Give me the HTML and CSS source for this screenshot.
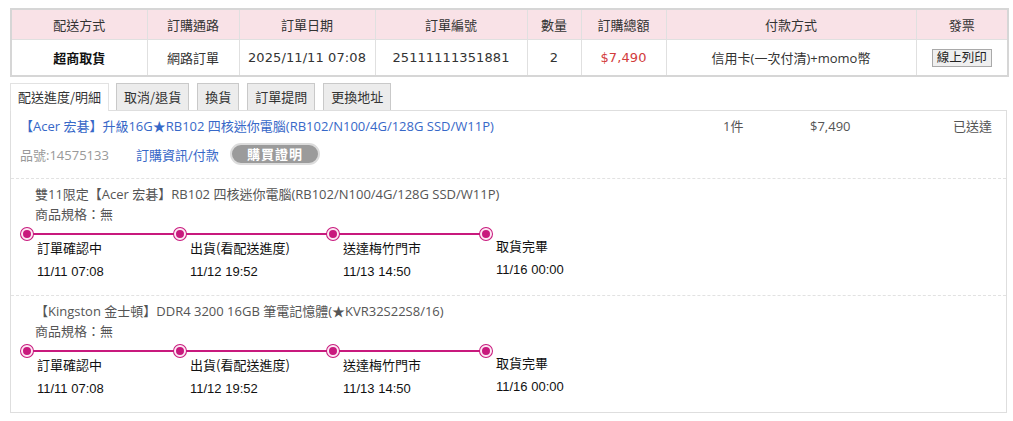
FILE: index.html
```html
<!DOCTYPE html>
<html lang="zh-Hant">
<head>
<meta charset="utf-8">
<title>訂單明細</title>
<link rel="stylesheet" href="styles.css">
</head>
<body>
<div class="page">
  <table class="order">
    <thead>
      <tr>
        <th class="c1">配送方式</th>
        <th class="c2">訂購通路</th>
        <th class="c3">訂單日期</th>
        <th class="c4">訂單編號</th>
        <th class="c5">數量</th>
        <th class="c6">訂購總額</th>
        <th class="c7">付款方式</th>
        <th class="c8">發票</th>
      </tr>
    </thead>
    <tbody>
      <tr>
        <td class="bold">超商取貨</td>
        <td>網路訂單</td>
        <td class="num">2025/11/11 07:08</td>
        <td class="num">25111111351881</td>
        <td class="num">2</td>
        <td class="num price">$7,490</td>
        <td>信用卡(一次付清)+momo幣</td>
        <td><span class="print-btn">線上列印</span></td>
      </tr>
    </tbody>
  </table>

  <div class="tabs">
    <span class="tab active">配送進度/明細</span>
    <span class="tab">取消/退貨</span>
    <span class="tab">換貨</span>
    <span class="tab">訂單提問</span>
    <span class="tab">更換地址</span>
  </div>

  <div class="panel">
    <div class="product">
      <div class="prod-row">
        <a class="prod-title">【Acer 宏碁】升級16G★RB102 四核迷你電腦(RB102/N100/4G/128G SSD/W11P)</a>
        <span class="prod-qty">1件</span>
        <span class="prod-price">$7,490</span>
        <span class="prod-status">已送達</span>
      </div>
      <div class="prod-meta">
        <span class="sku">品號:14575133</span>
        <a class="info-link">訂購資訊/付款</a>
        <span class="proof-btn">購買證明</span>
      </div>
    </div>

    <div class="item">
      <div class="item-name">雙11限定【Acer 宏碁】RB102 四核迷你電腦(RB102/N100/4G/128G SSD/W11P)</div>
      <div class="item-spec">商品規格：無</div>
      <div class="timeline">
        <div class="step">
          <div class="track"><span class="dot"></span><span class="line"></span></div>
          <div class="label">訂單確認中</div>
          <div class="date">11/11 07:08</div>
        </div>
        <div class="step">
          <div class="track"><span class="dot"></span><span class="line"></span></div>
          <div class="label">出貨(看配送進度)</div>
          <div class="date">11/12 19:52</div>
        </div>
        <div class="step">
          <div class="track"><span class="dot"></span><span class="line"></span></div>
          <div class="label">送達梅竹門市</div>
          <div class="date">11/13 14:50</div>
        </div>
        <div class="step last">
          <div class="track"><span class="dot"></span></div>
          <div class="label">取貨完畢</div>
          <div class="date">11/16 00:00</div>
        </div>
      </div>
    </div>

    <div class="item">
      <div class="item-name">【Kingston 金士頓】DDR4 3200 16GB 筆電記憶體(★KVR32S22S8/16)</div>
      <div class="item-spec">商品規格：無</div>
      <div class="timeline">
        <div class="step">
          <div class="track"><span class="dot"></span><span class="line"></span></div>
          <div class="label">訂單確認中</div>
          <div class="date">11/11 07:08</div>
        </div>
        <div class="step">
          <div class="track"><span class="dot"></span><span class="line"></span></div>
          <div class="label">出貨(看配送進度)</div>
          <div class="date">11/12 19:52</div>
        </div>
        <div class="step">
          <div class="track"><span class="dot"></span><span class="line"></span></div>
          <div class="label">送達梅竹門市</div>
          <div class="date">11/13 14:50</div>
        </div>
        <div class="step last">
          <div class="track"><span class="dot"></span></div>
          <div class="label">取貨完畢</div>
          <div class="date">11/16 00:00</div>
        </div>
      </div>
    </div>
  </div>
</div>
</body>
</html>
```

FILE: styles.css
```css
* { box-sizing: border-box; }

body {
  margin: 0;
  background: #fff;
  font-family: "Open Sans", "Noto Sans CJK TC", sans-serif;
  font-size: 13px;
  color: #333;
}

.page {
  padding: 8px 6px 0 10px;
  width: 1013px;
}

/* ---------- order summary table ---------- */
.order {
  width: 997px;
  border-collapse: collapse;
  border: 2px solid #d6d6d6;
  table-layout: fixed;
}
.order th,
.order td {
  border: 1px solid #e0e0e0;
  text-align: center;
  padding: 0;
  font-weight: normal;
  white-space: nowrap;
}
.order th {
  background: #f9e2e7;
  height: 30px;
  color: #333;
}
.order td {
  height: 37px;
  background: #fff;
}
.c1 { width: 136px; }
.c2 { width: 92px; }
.c3 { width: 136px; }
.c4 { width: 152px; }
.c5 { width: 54px; }
.c6 { width: 85px; }
.c7 { width: 250px; }
.c8 { width: 92px; }

.order td.bold { font-weight: bold; color: #111; }
.order td.num {
  font-family: "DejaVu Sans", "Noto Sans CJK TC", sans-serif;
  font-size: 13px;
  letter-spacing: 0.1px;
  color: #333;
}
.order td.price { color: #d23c3c; }

.print-btn {
  display: inline-block;
  padding: 0 4px;
  height: 18px;
  line-height: 16px;
  border: 1px solid #a9a9a9;
  background: #efefef;
  font-size: 12.5px;
  color: #222;
}

/* ---------- tabs ---------- */
.tabs {
  display: flex;
  margin-top: 6px;
  height: 27px;
}
.tab {
  height: 27px;
  line-height: 26px;
  padding: 0 7px;
  margin-right: 8px;
  border: 1px solid #c9c9c9;
  border-bottom: none;
  background: #ececec;
  color: #333;
  font-size: 13px;
  font-family: "Noto Sans CJK TC", sans-serif;
}
.tab.active {
  background: #fff;
  border-color: #e2e2e2;
  margin-right: 7px;
  position: relative;
  z-index: 1;
  height: 28px;
}

/* ---------- panel ---------- */
.panel {
  width: 997px;
  border: 1px solid #dedede;
}

.product {
  padding: 5px 14px 13px 9px;
  border-bottom: 1px dashed #e2e2e2;
}
.prod-row {
  display: flex;
  align-items: center;
  height: 20px;
  line-height: 20px;
}
.prod-title {
  width: 703px;
  color: #3768c8;
  white-space: nowrap;
}
.prod-qty { width: 87px; color: #555; }
.prod-price { width: 100px; color: #555; }
.prod-status { flex: 1; text-align: right; color: #555; }

.prod-meta {
  display: flex;
  align-items: center;
  margin-top: 7px;
  height: 22px;
}
.sku { width: 116px; color: #999; }
.info-link { width: 94px; color: #3768c8; }
.proof-btn {
  display: inline-block;
  width: 90px;
  height: 22px;
  line-height: 18px;
  border: 2px solid #dcdcdc;
  border-radius: 11px;
  background: #9b9b9b;
  color: #fff;
  font-weight: bold;
  text-align: center;
  letter-spacing: 1px;
}

/* ---------- items ---------- */
.item {
  padding: 5px 10px 11px 24px;
  border-bottom: 1px dashed #e2e2e2;
}
.item:last-child { border-bottom: none; }
.item-name,
.item-spec {
  line-height: 20px;
  color: #555;
  white-space: nowrap;
}

.timeline {
  display: flex;
  margin-left: -14px;
  margin-top: 4px;
}
.step {
  width: 153px;
  flex: none;
}
.track {
  display: flex;
  align-items: center;
  height: 12px;
}
.dot {
  flex: none;
  width: 12px;
  height: 12px;
  border-radius: 50%;
  background: #c8197d;
  border: 2px solid #fde8f3;
  box-shadow: 0 0 0 1px #c8197d;
}
.line {
  flex: 1;
  height: 2px;
  background: #c8197d;
}
.label {
  margin-top: -4px;
  padding-left: 16px;
  line-height: 24px;
  color: #111;
  font-family: "Noto Sans CJK TC", sans-serif;
  font-size: 13px;
  white-space: nowrap;
}
.step.last .label { margin-top: -6px; }
.date {
  padding-left: 16px;
  line-height: 24px;
  color: #111;
  font-family: "Liberation Sans", Arial, sans-serif;
  font-size: 13px;
}
```
